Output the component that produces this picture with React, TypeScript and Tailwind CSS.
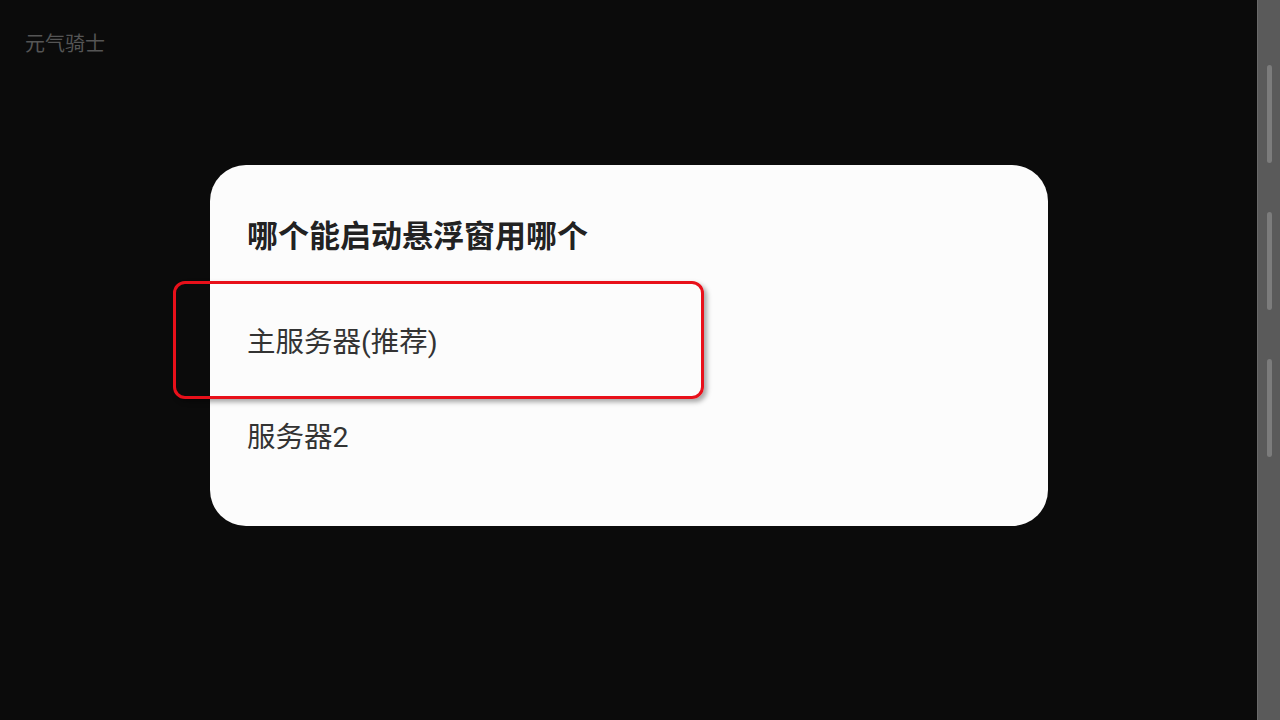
const fontStack = "font-['Roboto','Noto_Sans_CJK_SC',sans-serif]";

const options = ["主服务器(推荐)", "服务器2"];

function SideBar() {
  return (
    <div className="w-[23px] h-full bg-[#5a5a5a] border-l border-[#6a6a6a] flex flex-col items-center pt-[65px] gap-[49px]">
      <div className="w-[5px] h-[98px] rounded-full bg-[#7c7c7c]" />
      <div className="w-[5px] h-[98px] rounded-full bg-[#7c7c7c]" />
      <div className="w-[5px] h-[98px] rounded-full bg-[#7c7c7c]" />
    </div>
  );
}

export default function App() {
  return (
    <div className={`w-[1280px] h-[720px] flex bg-[#0b0b0b] overflow-hidden ${fontStack}`}>
      <div className="relative flex-1">
        <div className="pl-[25px] pt-[31px] text-[20px] leading-[26px] text-[#555555]">
          元气骑士
        </div>

        <div className="ml-[210px] mt-[108px] w-[838px] rounded-[36px] bg-[#fcfcfc] pt-[52px] pb-[40px]">
          <h2 className="pl-[37px] h-[40px] leading-[40px] text-[31px] font-bold text-[#222222]">
            哪个能启动悬浮窗用哪个
          </h2>
          <div className="mt-[39px]">
            {options.map((opt) => (
              <div
                key={opt}
                className="pl-[37px] h-[95px] flex items-center text-[28.5px] text-[#333333]"
              >
                {opt}
              </div>
            ))}
          </div>
        </div>

        {/* red highlight annotation over the first option */}
        <div className="absolute left-[173px] top-[281px] w-[531px] h-[118px] rounded-[12px] border-[3px] border-[#e8101a] shadow-[3px_3px_5px_rgba(0,0,0,0.35)]" />
      </div>
      <SideBar />
    </div>
  );
}
